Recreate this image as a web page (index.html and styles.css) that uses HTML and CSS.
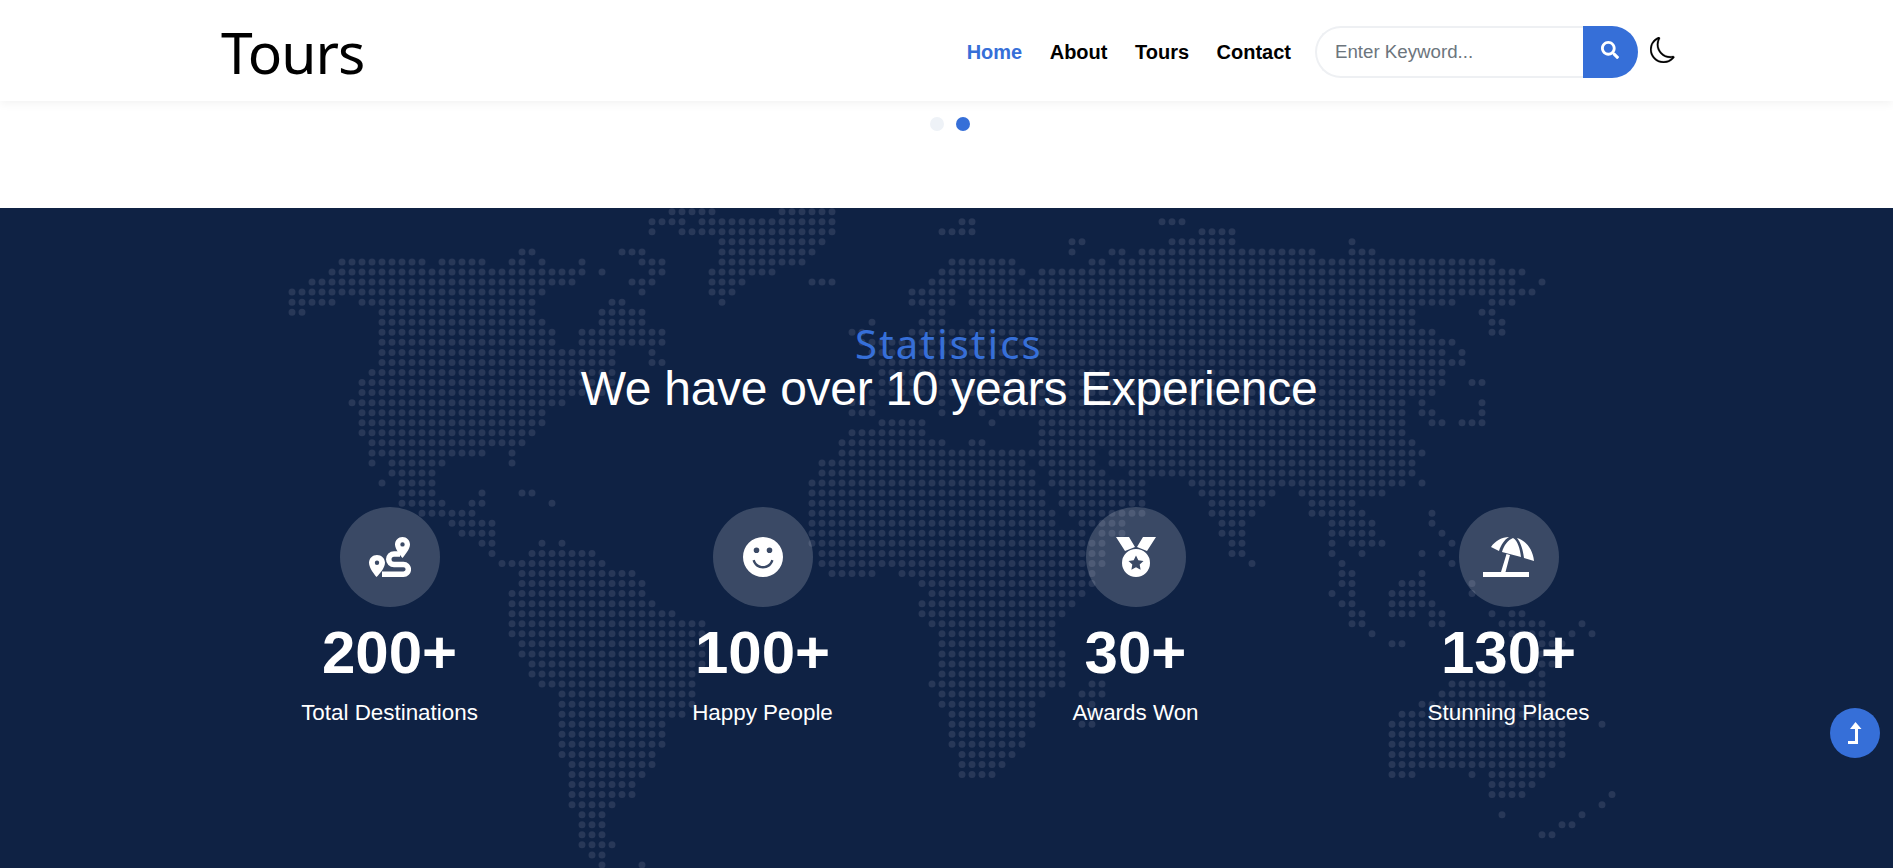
FILE: index.html
```html
<!DOCTYPE html>
<html lang="en">
<head>
    <meta charset="UTF-8">
    <meta name="viewport" content="width=device-width, initial-scale=1.0">
    <title>Tours</title>
    <link rel="stylesheet" href="styles.css">
</head>
<body>
    <header class="header">
        <div class="header-inner">
            <a class="logo" href="#">Tours</a>
            <nav class="nav">
                <a class="nav-link active" href="#">Home</a>
                <a class="nav-link" href="#">About</a>
                <a class="nav-link" href="#">Tours</a>
                <a class="nav-link" href="#">Contact</a>
            </nav>
            <form class="search">
                <input class="search-input" type="text" placeholder="Enter Keyword...">
                <button class="search-button" type="button" aria-label="Search">
                    <svg viewBox="0 0 512 512" width="18" height="18"><path fill="currentColor" d="M505 442.7L405.3 343c-4.5-4.5-10.6-7-17-7H372c27.6-35.3 44-79.7 44-128C416 93.1 322.9 0 208 0S0 93.1 0 208s93.1 208 208 208c48.3 0 92.7-16.4 128-44v16.3c0 6.4 2.5 12.5 7 17l99.7 99.7c9.4 9.4 24.6 9.4 33.9 0l28.3-28.3c9.4-9.4 9.4-24.6.1-34zM208 336c-70.7 0-128-57.2-128-128 0-70.7 57.2-128 128-128 70.7 0 128 57.2 128 128 0 70.7-57.2 128-128 128z"/></svg>
                </button>
            </form>
            <button class="theme-toggle" type="button" aria-label="Dark mode">
                <svg viewBox="0 0 16 16" width="26" height="26"><path fill="currentColor" stroke="currentColor" stroke-width="0.15" d="M6 .278a.768.768 0 0 1 .08.858 7.208 7.208 0 0 0-.878 3.46c0 4.021 3.278 7.277 7.318 7.277.527 0 1.04-.055 1.533-.16a.787.787 0 0 1 .81.316.733.733 0 0 1-.031.893A8.349 8.349 0 0 1 8.344 16C3.734 16 0 12.286 0 7.71 0 4.266 2.114 1.312 5.124.06A.752.752 0 0 1 6 .278zM4.858 1.311A7.269 7.269 0 0 0 1.025 7.71c0 4.02 3.279 7.276 7.319 7.276a7.316 7.316 0 0 0 5.205-2.162c-.337.042-.68.063-1.029.063-4.61 0-8.343-3.714-8.343-8.29 0-1.167.242-2.278.681-3.286z"/></svg>
            </button>
        </div>
    </header>

    <div class="pager">
        <span class="pager-dot"></span>
        <span class="pager-dot active"></span>
    </div>

    <section class="stats">
        <svg class="stats-map" id="statsMap" width="1893" height="660"><path id="statsMapDots"/></svg>
        <div class="stats-inner">
            <p class="stats-kicker">Statistics</p>
            <h2 class="stats-title">We have over 10 years Experience</h2>
            <div class="stats-grid">
                <div class="stat">
                    <div class="stat-icon">
                        <svg viewBox="0 0 42 40" width="42" height="40">
                            <path fill="#fff" fill-rule="evenodd" d="M8 18c4.4 0 8 3.400 8 7.700C16 31 10 37.500 7.500 40 5.500 37.500 0 31 0 25.700 0 21.400 3.600 18 8 18zM8 23.500a2.200 2.200 0 1 0 0 4.400 2.200 2.200 0 0 0 0-4.400zM33.500 0c4.200 0 7.500 3.300 7.500 7.400 0 4.600-5.500 11-7.500 13.500-2-2.500-7.500-8.900-7.500-13.500C26 3.300 29.300 0 33.500 0zM33.500 5.200a2.200 2.200 0 1 0 0 4.400 2.200 2.200 0 0 0 0-4.400z"/>
                            <path fill="none" stroke="#fff" stroke-width="5.500" d="M31 17h-6a5 5 0 0 0 0 10.500h9.500a4.500 4.500 0 0 1 0 9.700H13"/>
                        </svg>
                    </div>
                    <div class="stat-number">200+</div>
                    <div class="stat-label">Total Destinations</div>
                </div>
                <div class="stat">
                    <div class="stat-icon">
                        <svg viewBox="0 0 40 40" width="40" height="40"><path fill="#fff" fill-rule="evenodd" d="M20 0a20 20 0 1 1 0 40 20 20 0 0 1 0-40zM13.500 10.500a2.800 2.800 0 1 0 0 5.600 2.800 2.800 0 0 0 0-5.600zM26.500 10.500a2.800 2.800 0 1 0 0 5.600 2.800 2.800 0 0 0 0-5.600zM9.500 23.500c1.500 5 5.500 8 10.500 8s9-3 10.500-8l-2.300-.7c-1.200 3.900-4.300 6.300-8.200 6.300s-7-2.400-8.200-6.300z"/></svg>
                    </div>
                    <div class="stat-number">100+</div>
                    <div class="stat-label">Happy People</div>
                </div>
                <div class="stat">
                    <div class="stat-icon">
                        <svg viewBox="0 0 40 40" width="40" height="40">
                            <path fill="#fff" d="M0 0h13l6 10-10 4zM40 0H27l-6 10 10 4z"/>
                            <path fill="#fff" fill-rule="evenodd" d="M20 12a14 14 0 1 1 0 28 14 14 0 0 1 0-28zM20 18.500l-2.300 4.800-5.200.7 3.800 3.600-.9 5.200 4.600-2.500 4.600 2.500-.9-5.200 3.800-3.600-5.200-.7z"/>
                        </svg>
                    </div>
                    <div class="stat-number">30+</div>
                    <div class="stat-label">Awards Won</div>
                </div>
                <div class="stat">
                    <div class="stat-icon">
                        <svg viewBox="0 0 51 40" width="51" height="40"><path fill="#fff" d="M8 10C12 4 19 0 26 0 21 3 18 8 16 14zM19 15C21 8 25 3 30 1 35 4 37 12 38 20zM34 1C42 3 50 12 51 24L41 21C40 13 38 6 34 1zM23.500 17l3.500 1-4.500 17H18zM0 35h46v5H0z"/></svg>
                    </div>
                    <div class="stat-number">130+</div>
                    <div class="stat-label">Stunning Places</div>
                </div>
            </div>
        </div>
    </section>

    <a class="back-top" href="#" aria-label="Back to top">
        <svg viewBox="0 0 14 22" width="14" height="22"><path fill="#fff" d="M7.500 0L13.500 7H10V22H0V19H7V7H2z"/></svg>
    </a>

    <script src="map.js"></script>
</body>
</html>
```

FILE: styles.css
```css
* {
    box-sizing: border-box;
}
html, body {
    height: 100%;
}
body {
    margin: 0;
    display: flex;
    flex-direction: column;
    overflow: hidden;
    font-family: "Liberation Sans", Arial, sans-serif;
    color: #000;
    background-color: #fff;
}
a {
    text-decoration: none;
    color: inherit;
}

/* header */
.header {
    position: relative;
    z-index: 2;
    height: 101px;
    background-color: #fff;
    box-shadow: 0 2px 10px rgba(0, 0, 0, 0.06);
}
.header-inner {
    display: flex;
    align-items: center;
    width: 1492px;
    height: 100%;
    margin-left: 203px;
    padding: 3px 18px 0 18px;
}
.logo {
    margin-right: auto;
    font-family: "Comic Sans MS", "Noto Sans", sans-serif;
    font-size: 57px;
    letter-spacing: -1px;
}
.nav {
    display: flex;
    gap: 27.5px;
}
.nav-link {
    font-size: 20px;
    font-weight: bold;
}
.nav-link.active {
    color: #366fd8;
}
.search {
    display: flex;
    width: 323px;
    height: 52px;
    margin-left: 24px;
}
.search-input {
    flex: 1;
    min-width: 0;
    padding: 0 18px;
    border: 2px solid #eef0f3;
    border-right: none;
    border-radius: 50px 0 0 50px;
    outline: none;
    font-family: inherit;
    font-size: 18.7px;
}
.search-input::placeholder {
    color: #6c757d;
}
.search-button {
    display: flex;
    align-items: center;
    justify-content: center;
    width: 55px;
    padding: 0 2px 4px 0;
    border: none;
    border-radius: 0 50px 50px 0;
    background-color: #366fd8;
    color: #fff;
}
.theme-toggle {
    display: flex;
    width: 27px;
    margin-left: 12px;
    padding: 0 0 4px;
    border: none;
    background: none;
    color: #000;
}

/* carousel dots */
.pager {
    display: flex;
    justify-content: center;
    gap: 12px;
    height: 107px;
    padding: 16px 0 0 6px;
}
.pager-dot {
    width: 14px;
    height: 14px;
    border-radius: 50%;
    background-color: #eef2f7;
}
.pager-dot.active {
    background-color: #366fd8;
}

/* statistics */
.stats {
    position: relative;
    flex: 1;
    overflow: hidden;
    background-color: #0f2244;
    color: #fff;
}
.stats-map {
    position: absolute;
    top: 0;
    left: 0;
}
.stats-map path {
    fill: none;
    stroke: #283858;
    stroke-width: 7;
    stroke-linecap: round;
}
.stats-inner {
    position: relative;
    width: 1492px;
    margin-left: 203px;
    padding-top: 115px;
    text-align: center;
}
.stats-kicker {
    margin: 0;
    font-family: "Comic Sans MS", "Noto Sans", sans-serif;
    font-size: 40px;
    letter-spacing: 2.2px;
    line-height: 41px;
    color: #366fd8;
}
.stats-title {
    margin: 0;
    font-size: 48px;
    font-weight: normal;
    letter-spacing: -0.3px;
    line-height: 50px;
}
.stats-grid {
    display: grid;
    grid-template-columns: repeat(4, 1fr);
    margin-top: 93px;
}
.stat-icon {
    display: flex;
    align-items: center;
    justify-content: center;
    width: 100px;
    height: 100px;
    margin: 0 auto;
    border-radius: 50%;
    background-color: rgba(255, 255, 255, 0.18);
}
.stat-number {
    margin-top: 11px;
    font-size: 60px;
    font-weight: bold;
    line-height: 70px;
}
.stat-label {
    margin-top: 11px;
    font-size: 22.4px;
    line-height: 28px;
}

.back-top {
    position: fixed;
    right: 13px;
    bottom: 110px;
    display: flex;
    align-items: center;
    justify-content: center;
    width: 50px;
    height: 50px;
    border-radius: 50%;
    background-color: #366fd8;
}
```

FILE: map.js
```js
// dotted world map, rows of column runs on a 10px grid
var rows = [
    "38-42 49-54",
    "36-39 41-54 67-68 87-89",
    "36 39-54 65-68 91-94",
    "43-53 78-79 88-94 106",
    "23-24 33-35 43-52 78 82-83 85-102 106-108",
    "5-13 15-19 22-23 25 29 35-37 43-51 66-72 80-81 83-120",
    "4-29 31 36-37 42-48 65-73 75-123",
    "2-28 34-36 42-45 52-54 64-72 74-122 125",
    "0-25 35 42-44 62-66 68-124",
    "0-4 7-24 32-33 43 62-66 68-116 120-122",
    "0-1 9-24 31-35 64-65 69-112 119-120",
    "9-25 31-35 58 63-65 68-112 120-121",
    "9-26 29-37 56-57 62-114 120-121",
    "9-26 29-37 57-116",
    "9-32 36 58-115 117",
    "9-32 36-37 58-117",
    "8-32 59-71 73 75-115",
    "7-32 59-115 118-119",
    "7-32 58-114",
    "6-27 56-58 65 69 71-111 113 119",
    "7-25 56-58 65 69 71-111 113-114 119",
    "7-25 59-63 70 75-111 114-115 117-119",
    "7-24 56-63 75-111",
    "8-23 55-65 68-69 75-112",
    "8-19 22 55-80 82-113",
    "8 10-15 22 53-73 75-80 82-112",
    "10-14 53-74 76-81 84-112",
    "9 11-14 52-74 76-85 90-111 113",
    "11-14 19 23-24 52-75 77-85 91-98 101-109",
    "11-15 18-19 26 52-75 77-85 92-97 102-106",
    "13-18 52-76 78-85 92-96 102-107 114",
    "16-20 52-76 79-83 93-95 104-108 114",
    "17-20 52-79 81-83 93-95 104-108 115",
    "19-20 25 27 52-81 94-95 104 106-109 116",
    "20 24-30 53-81 94-95 104 107 113 115",
    "21-31 53-81 96 105 116",
    "23-34 54-58 61-80 105-106 113",
    "23-35 63-80 105-106 111-113 118",
    "22-35 64-79 104 106 110-113 118",
    "22-36 63-78 105-106 110-114",
    "22-38 63-77 106-107 110-112 114-115 120 122-123",
    "22-41 64-76 106-107 114-115 121-125 129",
    "22-41 65-76 108 122-126 128 130",
    "23-41 65-76 110-111 124-127",
    "23-41 65-77 125-127",
    "24-41 65-77 125-126",
    "24-40 65-77 125",
    "25-40 64-77 80-81 116-121 124-125",
    "27-40 65-75 79-81 115-125",
    "27-40 65-74 80 113-125",
    "27-39 66-74 80 111-126",
    "27-37 66-74 79-80 110-127 131",
    "27-37 66-73 110-127",
    "27-37 66-73 110-127",
    "27-36 67-72 110-127",
    "28-36 67-71 110-126",
    "28-35 67-70 110-112 118 120-125",
    "28-34 120-124",
    "28-34 120-123 132",
    "28-32 131",
    "29-31 121 129",
    "29-31 127-128",
    "29-31 125-126",
    "29-32",
    "30-31",
    "31 35"
];

var d = "";
rows.forEach(function(row, r) {
    var y = 3.7 + r * 10.05;
    row.split(" ").forEach(function(run) {
        var parts = run.split("-");
        var start = parseInt(parts[0]);
        var end = parseInt(parts[1] || parts[0]);
        for (var c = start; c <= end; c++) {
            d += "M" + (292 + c * 10) + " " + y.toFixed(2) + "h0";
        }
    });
});
document.getElementById("statsMapDots").setAttribute("d", d);
```
